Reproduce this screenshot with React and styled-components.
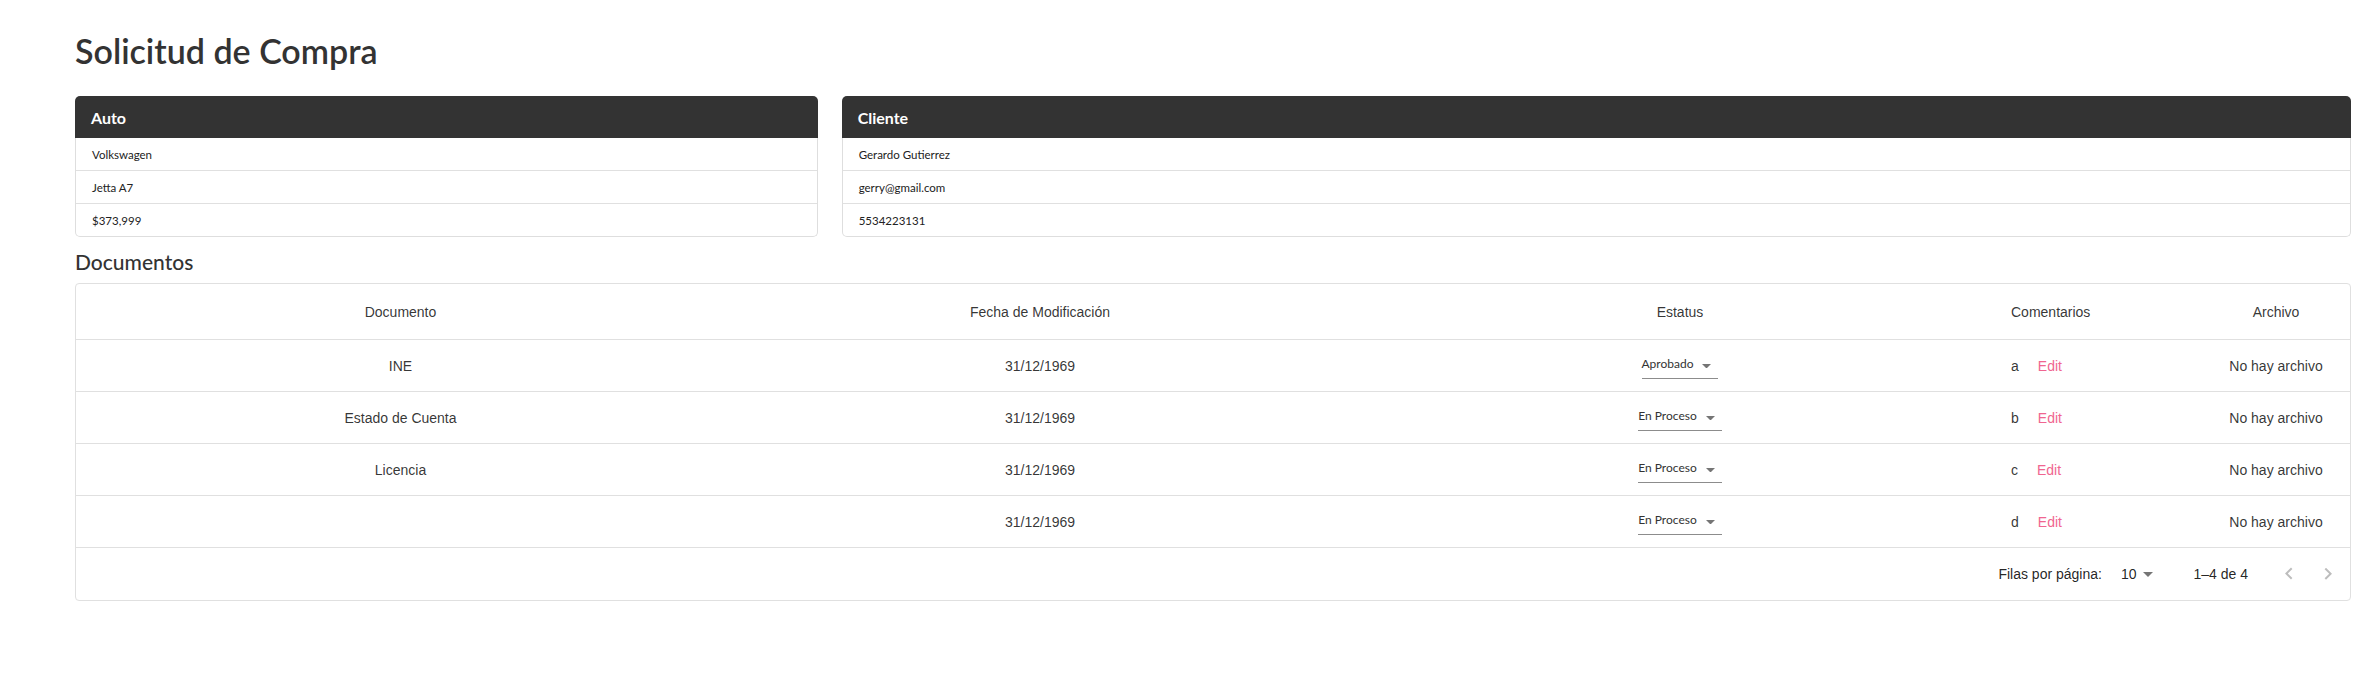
import styled, { createGlobalStyle } from "styled-components";

const GlobalStyle = createGlobalStyle`
  *, *::before, *::after { box-sizing: border-box; }
  body {
    margin: 0;
    background: #fff;
    font-family: Lato, "Liberation Sans", sans-serif;
    color: #333;
  }
`;

const auto = ["Volkswagen", "Jetta A7", "$373,999"];
const cliente = ["Gerardo Gutierrez", "gerry@gmail.com", "5534223131"];

const columns = [
  { label: "Documento", w: 649 },
  { label: "Fecha de Modificación", w: 630 },
  { label: "Estatus", w: 650 },
  { label: "Comentarios", w: 185, align: "left", pl: 6 },
  { label: "Archivo", w: 160, pl: 24, pr: 12 },
];

const docs = [
  { name: "INE", date: "31/12/1969", status: "Aprobado", comment: "a" },
  { name: "Estado de Cuenta", date: "31/12/1969", status: "En Proceso", comment: "b" },
  { name: "Licencia", date: "31/12/1969", status: "En Proceso", comment: "c" },
  { name: "", date: "31/12/1969", status: "En Proceso", comment: "d" },
];

const DropArrow = ({ w = 10 }) => (
  <svg width={w} height={w / 2} viewBox="0 0 10 5">
    <path d="M0 0l5 5 5-5z" fill="rgba(0,0,0,0.54)" />
  </svg>
);

const ChevronLeft = () => (
  <svg width="24" height="24" viewBox="0 0 24 24">
    <path d="M15.41 16.09l-4.59-4.59 4.59-4.59L14 5.5l-6 6 6 6z" fill="rgba(0,0,0,0.26)" />
  </svg>
);

const ChevronRight = () => (
  <svg width="24" height="24" viewBox="0 0 24 24">
    <path d="M8.59 16.34l4.58-4.59-4.58-4.59L10 5.75l6 6-6 6z" fill="rgba(0,0,0,0.26)" />
  </svg>
);

const InfoCard = ({ title, rows }) => (
  <Card>
    <CardHeader>{title}</CardHeader>
    <CardBody>
      {rows.map(r => (
        <CardRow key={r}>{r}</CardRow>
      ))}
    </CardBody>
  </Card>
);

export default function App() {
  return (
    <>
      <GlobalStyle />
      <Page>
        <Title>Solicitud de Compra</Title>
        <CardGrid>
          <InfoCard title="Auto" rows={auto} />
          <InfoCard title="Cliente" rows={cliente} />
        </CardGrid>
        <SectionTitle>Documentos</SectionTitle>
        <TablePaper>
          <Table>
            <colgroup>
              {columns.map(c => (
                <col key={c.label} style={{ width: c.w }} />
              ))}
            </colgroup>
            <thead>
              <tr>
                {columns.map(c => (
                  <Th key={c.label} $align={c.align} $pl={c.pl} $pr={c.pr}>
                    {c.label}
                  </Th>
                ))}
              </tr>
            </thead>
            <tbody>
              {docs.map(d => (
                <tr key={d.comment}>
                  <Td>{d.name}</Td>
                  <Td>{d.date}</Td>
                  <Td>
                    <StatusSelect>
                      {d.status}
                      <ArrowWrap><DropArrow w={9} /></ArrowWrap>
                    </StatusSelect>
                  </Td>
                  <Td $align="left" $pl={6}>
                    {d.comment}
                    <EditButton>Edit</EditButton>
                  </Td>
                  <Td $pl={24} $pr={12}>No hay archivo</Td>
                </tr>
              ))}
            </tbody>
          </Table>
          <Pagination>
            <Caption>Filas por página:</Caption>
            <PageSize>
              10
              <DropArrow />
            </PageSize>
            <Caption>1–4 de 4</Caption>
            <PageActions>
              <IconBox><ChevronLeft /></IconBox>
              <IconBox><ChevronRight /></IconBox>
            </PageActions>
          </Pagination>
        </TablePaper>
      </Page>
    </>
  );
}

const Page = styled.div`
  padding: 30px 24px 40px 75px;
`;

const Title = styled.h1`
  margin: 0;
  font-family: Lato, sans-serif;
  font-size: 34px;
  line-height: 42px;
  font-weight: 600;
  color: #333;
`;

const CardGrid = styled.div`
  display: grid;
  grid-template-columns: calc((100% + 24px) / 3 - 24px) 1fr;
  gap: 24px;
  margin-top: 24px;
`;

const Card = styled.div`
  display: flex;
  flex-direction: column;
`;

const CardHeader = styled.div`
  height: 42px;
  display: flex;
  align-items: center;
  padding: 0 16px;
  background: #333;
  color: #fff;
  font-family: Lato, sans-serif;
  font-weight: 700;
  font-size: 16px;
  border-radius: 5px 5px 0 0;
`;

const CardBody = styled.div`
  border: 1px solid #dedede;
  border-top: none;
  border-radius: 0 0 5px 5px;
`;

const CardRow = styled.div`
  height: 33px;
  display: flex;
  align-items: center;
  padding: 0 16px;
  font-family: Lato, sans-serif;
  font-size: 11.5px;
  color: #222;
  border-bottom: 1px solid #e0e0e0;

  &:last-child {
    height: 32px;
    border-bottom: none;
  }
`;

const SectionTitle = styled.h2`
  margin: 12px 0 9px;
  font-family: Lato, sans-serif;
  font-size: 21px;
  line-height: 25px;
  font-weight: 500;
  color: #333;
`;

const TablePaper = styled.div`
  border: 1px solid #e0e0e0;
  border-radius: 4px;
  overflow: hidden;
`;

const Table = styled.table`
  width: 100%;
  table-layout: fixed;
  border-collapse: separate;
  border-spacing: 0;
`;

const cellBase = `
  font-family: "Liberation Sans", Arial, sans-serif;
  font-size: 14px;
  color: rgba(0, 0, 0, 0.8);
  font-weight: 400;
  vertical-align: middle;
  border-bottom: 1px solid #e0e0e0;
`;

const Th = styled.th`
  ${cellBase}
  height: 56px;
  text-align: ${p => p.$align || "center"};
  padding: 0 ${p => p.$pr || 0}px 0 ${p => p.$pl || 0}px;
`;

const Td = styled.td`
  ${cellBase}
  height: 52px;
  text-align: ${p => p.$align || "center"};
  padding: 0 ${p => p.$pr || 0}px 0 ${p => p.$pl || 0}px;
`;

const StatusSelect = styled.div`
  display: inline-flex;
  align-items: center;
  gap: 9px;
  vertical-align: middle;
  margin-top: 4px;
  padding: 1px 7px 7px 0;
  line-height: 14px;
  font-family: Lato, sans-serif;
  font-size: 12px;
  color: #333;
  border-bottom: 1px solid rgba(0, 0, 0, 0.45);
`;

const ArrowWrap = styled.span`
  display: flex;
  transform: translateY(2px);
`;

const EditButton = styled.button`
  margin-left: 19px;
  padding: 0;
  border: 0;
  background: none;
  color: #f06590;
  font-family: "Liberation Sans", Arial, sans-serif;
  font-size: 14px;
  cursor: pointer;
`;

const Pagination = styled.div`
  height: 52px;
  display: flex;
  justify-content: flex-end;
  align-items: center;
  padding-right: 10px;
`;

const Caption = styled.span`
  font-family: "Liberation Sans", Arial, sans-serif;
  font-size: 14px;
  color: rgba(0, 0, 0, 0.87);
`;

const PageSize = styled.div`
  display: flex;
  align-items: center;
  gap: 6px;
  margin: 0 41px 0 19px;
  font-family: "Liberation Sans", Arial, sans-serif;
  font-size: 14px;
  color: rgba(0, 0, 0, 0.87);
`;

const PageActions = styled.div`
  display: flex;
  gap: 15px;
  margin-left: 29px;
`;

const IconBox = styled.span`
  display: flex;
  width: 24px;
  height: 24px;
`;
